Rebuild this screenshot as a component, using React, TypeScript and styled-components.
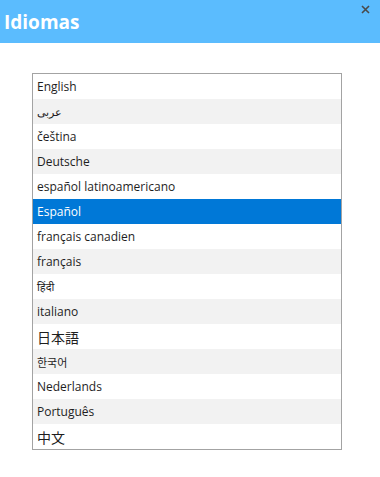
import React from "react";
import styled, { createGlobalStyle } from "styled-components";

const GlobalStyle = createGlobalStyle`
    body {
        margin: 0;
        background: #ffffff;
        font-family: "Open Sans", "Noto Sans", "Noto Sans CJK JP", sans-serif;
    }
`;

const Header = styled.div`
    position: relative;
    height: 43px;
    background-color: #5bbcfe;
    display: flex;
    align-items: center;
    padding-left: 4px;
`;

const Title = styled.h1`
    margin: 0;
    color: #ffffff;
    font-size: 19px;
    font-weight: 700;
`;

const Close = styled.button`
    position: absolute;
    top: 3px;
    right: 9px;
    width: 12px;
    height: 12px;
    padding: 0;
    border: none;
    background: none;
    display: flex;
    align-items: center;
    justify-content: center;
`;

const ListBox = styled.ul`
    list-style: none;
    margin: 30px 0 0 32px;
    padding: 0;
    width: 308px;
    border: 1px solid #a3a3a3;
`;

const Row = styled.li<{ $selected?: boolean; $alt?: boolean; $size: number }>`
    height: 25px;
    display: flex;
    align-items: center;
    padding-left: 4px;
    font-size: ${p => p.$size}px;
    color: ${p => (p.$selected ? "#ffffff" : "#1e1e1e")};
    background-color: ${p => (p.$selected ? "#0078d7" : p.$alt ? "#f2f2f2" : "#ffffff")};
    white-space: nowrap;
`;

const languages: { label: string; size?: number }[] = [
    { label: "English" },
    { label: "عربى", size: 11 },
    { label: "čeština" },
    { label: "Deutsche" },
    { label: "español latinoamericano" },
    { label: "Español" },
    { label: "français canadien" },
    { label: "français" },
    { label: "हिंदी", size: 11 },
    { label: "italiano" },
    { label: "日本語", size: 14 },
    { label: "한국어", size: 11 },
    { label: "Nederlands" },
    { label: "Português" },
    { label: "中文", size: 14 },
];

export default function App() {
    return (
        <>
            <GlobalStyle />
            <Header>
                <Title>Idiomas</Title>
                <Close aria-label="Cerrar">
                    <svg width="9" height="9" viewBox="0 0 9 9">
                        <path d="M1 1 L8 8 M8 1 L1 8" stroke="#4a4a4a" strokeWidth="1.6" />
                    </svg>
                </Close>
            </Header>
            <ListBox>
                {languages.map((lang, i) => (
                    <Row
                        key={lang.label}
                        $size={lang.size ?? 12}
                        $alt={i % 2 === 1}
                        $selected={lang.label === "Español"}>
                        {lang.label}
                    </Row>
                ))}
            </ListBox>
        </>
    );
}
